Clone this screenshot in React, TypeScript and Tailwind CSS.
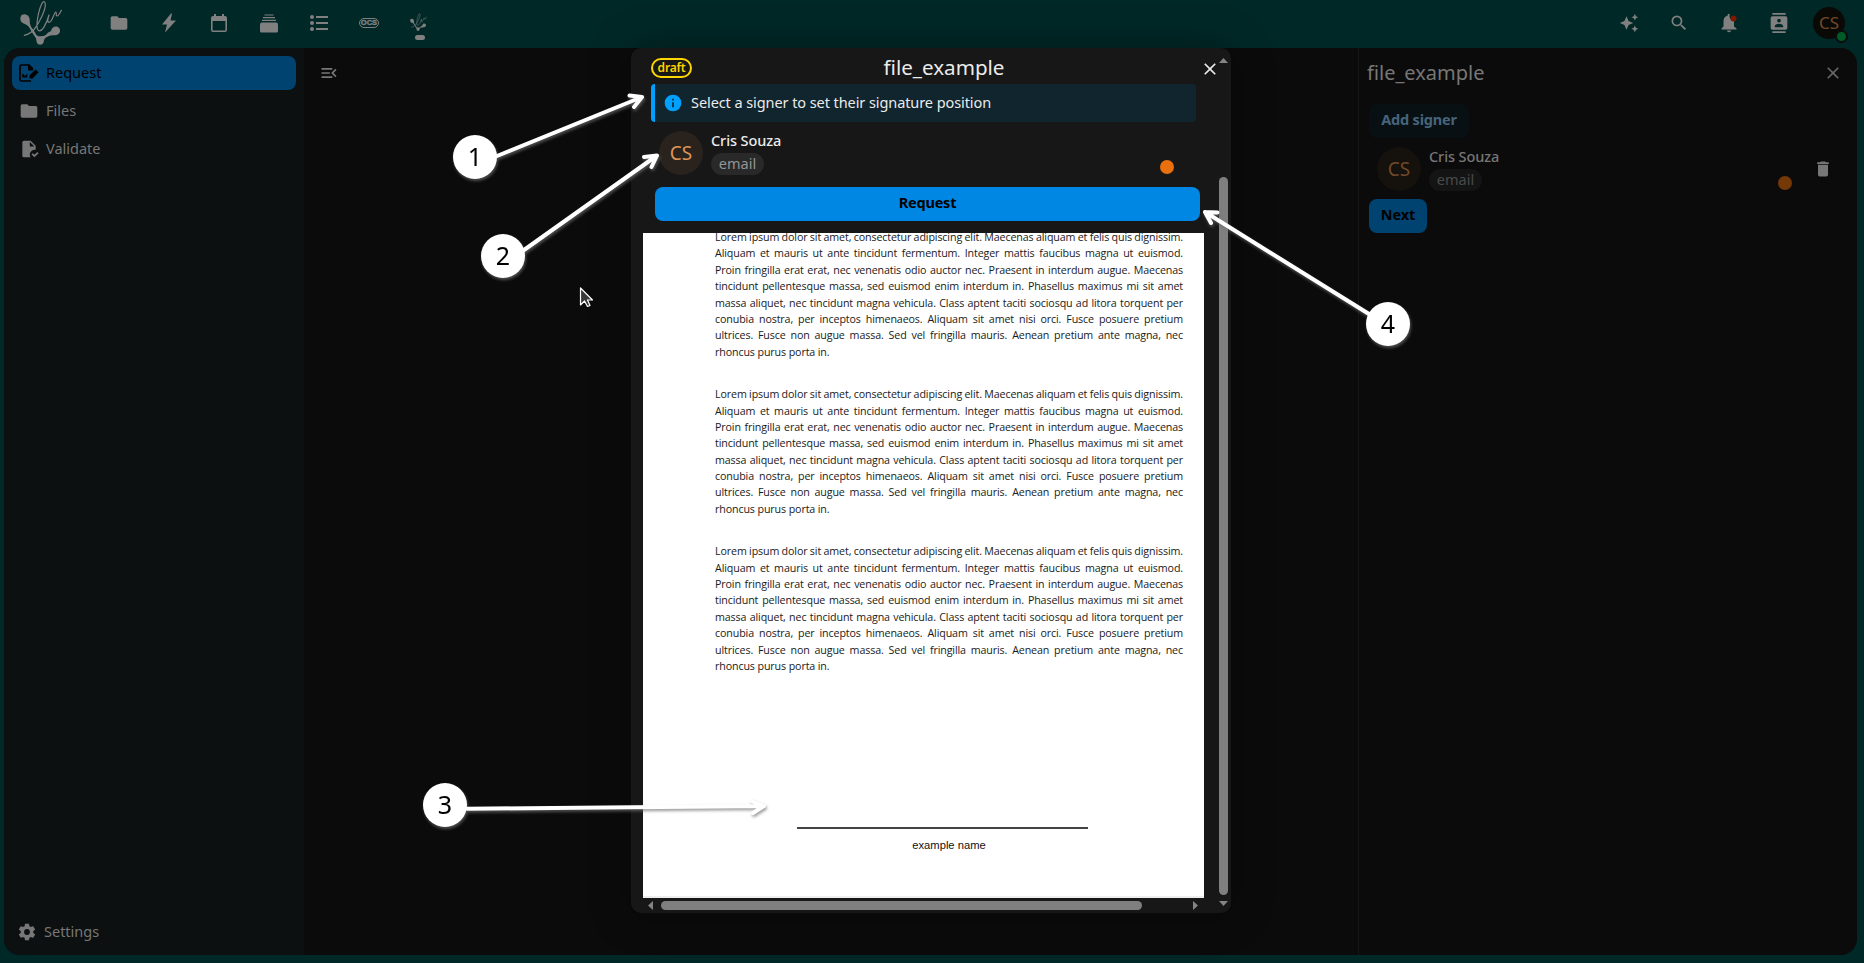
import type { ReactNode } from "react";

type IconProps = { d: string; size?: number; className?: string };

const Icon = ({ d, size = 24, className = "" }: IconProps) => (
  <svg width={size} height={size} viewBox="0 0 24 24" fill="currentColor" className={className} aria-hidden="true">
    <path d={d} />
  </svg>
);

const icons = {
  folder: "M10,4H4C2.89,4 2,4.89 2,6V18A2,2 0 0,0 4,20H20A2,2 0 0,0 22,18V8C22,6.89 21.1,6 20,6H12L10,4Z",
  validate:
    "M23.5 17L18.5 22L15 18.5L16.5 17L18.5 19L22 15.5L23.5 17M13.1 22H6C4.89 22 4 21.11 4 20V4C4 2.9 4.89 2 6 2H14L20 8V13.1C19.7 13 19.3 13 19 13C15.7 13 13 15.7 13 19C13 20.1 13.3 21.1 13.8 22M13 9H18.5L13 3.5V9Z",
  cog: "M12,15.5A3.5,3.5 0 0,1 8.5,12A3.5,3.5 0 0,1 12,8.5A3.5,3.5 0 0,1 15.5,12A3.5,3.5 0 0,1 12,15.5M19.43,12.97C19.47,12.65 19.5,12.33 19.5,12C19.5,11.67 19.47,11.34 19.43,11L21.54,9.37C21.73,9.22 21.78,8.95 21.66,8.73L19.66,5.27C19.54,5.05 19.27,4.96 19.05,5.05L16.56,6.05C16.04,5.66 15.5,5.32 14.87,5.07L14.5,2.42C14.46,2.18 14.25,2 14,2H10C9.75,2 9.54,2.18 9.5,2.42L9.13,5.07C8.5,5.32 7.96,5.66 7.44,6.05L4.95,5.05C4.73,4.96 4.46,5.05 4.34,5.27L2.34,8.73C2.21,8.95 2.27,9.22 2.46,9.37L4.57,11C4.53,11.34 4.5,11.67 4.5,12C4.5,12.33 4.53,12.65 4.57,12.97L2.46,14.63C2.27,14.78 2.21,15.05 2.34,15.27L4.34,18.73C4.46,18.95 4.73,19.03 4.95,18.95L7.44,17.94C7.96,18.34 8.5,18.68 9.13,18.93L9.5,21.58C9.54,21.82 9.75,22 10,22H14C14.25,22 14.46,21.82 14.5,21.58L14.87,18.93C15.5,18.67 16.04,18.34 16.56,17.94L19.05,18.95C19.27,19.03 19.54,18.95 19.66,18.73L21.66,15.27C21.78,15.05 21.73,14.78 21.54,14.63L19.43,12.97Z",
  menuOpen:
    "M21,15.61L19.59,17L14.58,12L19.59,7L21,8.39L17.44,12L21,15.61M3,6H16V8H3V6M3,13V11H13V13H3M3,18V16H16V18H3Z",
  close:
    "M19,6.41L17.59,5L12,10.59L6.41,5L5,6.41L10.59,12L5,17.59L6.41,19L12,13.41L17.59,19L19,17.59L13.41,12L19,6.41Z",
  magnify:
    "M9.5,3A6.5,6.5 0 0,1 16,9.5C16,11.11 15.41,12.59 14.44,13.73L14.71,14H15.5L20.5,19L19,20.5L14,15.5V14.71L13.73,14.44C12.59,15.41 11.11,16 9.5,16A6.5,6.5 0 0,1 3,9.5A6.5,6.5 0 0,1 9.5,3M9.5,5C7,5 5,7 5,9.5C5,12 7,14 9.5,14C12,14 14,12 14,9.5C14,7 12,5 9.5,5Z",
  sparkle:
    "M19,1L17.74,3.75L15,5L17.74,6.26L19,9L20.25,6.26L23,5L20.25,3.75M9,4L6.5,9.5L1,12L6.5,14.5L9,20L11.5,14.5L17,12L11.5,9.5M19,15L17.74,17.74L15,19L17.74,20.25L19,23L20.25,20.25L23,19L20.25,17.74",
  contacts:
    "M20,0H4V2H20V0M4,24H20V22H4V24M20,4H4A2,2 0 0,0 2,6V18A2,2 0 0,0 4,20H20A2,2 0 0,0 22,18V6A2,2 0 0,0 20,4M12,6.75A2.25,2.25 0 0,1 14.25,9A2.25,2.25 0 0,1 12,11.25A2.25,2.25 0 0,1 9.75,9A2.25,2.25 0 0,1 12,6.75M17,17H7V15.5C7,13.83 10.33,13 12,13C13.67,13 17,13.83 17,15.5V17Z",
  trash: "M19,4H15.5L14.5,3H9.5L8.5,4H5V6H19M6,19A2,2 0 0,0 8,21H16A2,2 0 0,0 18,19V7H6V19Z",
  info: "M13,9H11V7H13M13,17H11V11H13M12,2A10,10 0 0,0 2,12A10,10 0 0,0 12,22A10,10 0 0,0 22,12A10,10 0 0,0 12,2Z",
};

const LogoShape = () => (
  <>
    <path
      fill="currentColor"
      d="M17 50C20 41 36 40 42 51C46 59 43 67 46 75C49 84 57 91 61 99C63 106 68 109 76 109C88 109 94 105 98 99C102 94 107 97 109 90C112 78 127 76 133 85C139 95 132 105 121 106C110 106 104 107 96 111C89 114 87 119 86 126C84 137 67 137 65 126C64 115 61 111 56 105C50 97 47 88 40 79C34 72 25 72 20 67C16 62 15 56 17 50Z"
    />
    <path
      fill="none"
      stroke="currentColor"
      strokeWidth="3.6"
      strokeLinecap="round"
      strokeLinejoin="round"
      d="M28 106C46 101 55 93 62 82C74 64 91 31 91 15C91 4 86 2 81 10C72 27 65 60 66 79C67 98 78 95 86 83C94 70 99 56 102 45C98 58 96 66 102 67C111 68 118 36 122 36C126 36 121 49 127 48C131 47 136 36 139 31"
    />
  </>
);

const NavCell = ({ children }: { children: ReactNode }) => (
  <div className="flex h-[46px] w-[50px] items-center justify-center">{children}</div>
);

function Header() {
  return (
    <header className="flex h-12 shrink-0 items-start text-[#808080]">
      <svg width="60" height="50" viewBox="0 0 180 150" className="ml-[15px] shrink-0">
        <LogoShape />
      </svg>
      <nav className="ml-[19px] flex">
        <NavCell>
          <Icon d={icons.folder} size={20} />
        </NavCell>
        <NavCell>
          <svg width="16" height="20" viewBox="0 0 16 20" fill="currentColor">
            <path d="M10 .5 1 11.5h5l-2 8L15 7.5h-5.500l1.500-7z" />
          </svg>
        </NavCell>
        <NavCell>
          <svg width="16" height="18" viewBox="0 0 16 18" fill="currentColor" fillRule="evenodd">
            <path d="M3 0h2v2h6V0h2v2h1a2 2 0 0 1 2 2v12a2 2 0 0 1-2 2H2a2 2 0 0 1-2-2V4a2 2 0 0 1 2-2h1zM1.600 7v9.400h12.800V7z" />
          </svg>
        </NavCell>
        <NavCell>
          <svg width="18" height="19" viewBox="0 0 18 19" fill="currentColor">
            <path d="M4.500 .5h9v1h-9zM3 3h12v1.300H3zM2 5.700h14v1.300H2zM2 8.500h14a2 2 0 0 1 2 2V17a1.500 1.500 0 0 1-1.500 1.500h-15A1.500 1.500 0 0 1 0 17v-6.500a2 2 0 0 1 2-2z" />
          </svg>
        </NavCell>
        <NavCell>
          <svg width="18" height="18" viewBox="0 0 18 18" fill="currentColor">
            <circle cx="2" cy="3" r="2" />
            <circle cx="2" cy="9" r="2" />
            <circle cx="2" cy="15" r="2" />
            <path d="M6 2h12v2H6zM6 8h12v2H6zM6 14h12v2H6z" />
          </svg>
        </NavCell>
        <NavCell>
          <span className="flex h-[10px] w-5 items-center justify-center rounded-full border-[1.5px] border-[#808080] font-['Liberation_Sans'] text-[7.5px] leading-none font-black [-webkit-text-stroke:0.4px_#808080]">
            OCS
          </span>
        </NavCell>
        <NavCell>
          <div className="flex flex-col items-center pl-px">
            <svg width="24" height="20" viewBox="0 0 180 150" strokeWidth="6" className="mt-[7px]">
              <LogoShape />
            </svg>
            <span className="mt-[2px] h-[5px] w-[10px] rounded-full bg-[#808080]" />
          </div>
        </NavCell>
      </nav>
      <div className="mr-[10px] ml-auto flex">
        <NavCell>
          <Icon d={icons.sparkle} size={20} />
        </NavCell>
        <NavCell>
          <Icon d={icons.magnify} size={20} />
        </NavCell>
        <NavCell>
          <svg width="20" height="20" viewBox="0 0 20 20" fill="currentColor">
            <path d="M8.500 2.800V2.300a1.500 1.500 0 0 1 2.300-1.300A5 5 0 0 0 15 8v5.500l2.500 2V16.500H2.500V15.500l2-2V8.500A5.700 5.700 0 0 1 8.500 2.800zM8 17.500h4a2 1.800 0 0 1-4 0z" />
            <circle cx="14.500" cy="5.500" r="3" fill="#801800" />
          </svg>
        </NavCell>
        <NavCell>
          <Icon d={icons.contacts} size={20} />
        </NavCell>
        <div className="flex h-[46px] w-[50px] items-center justify-center">
          <div className="relative flex size-8 items-center justify-center rounded-full bg-[#0b0905] text-[17px] text-[#70492a]">
            CS
            <span className="absolute right-[-3px] bottom-[-4px] size-[13px] rounded-full border-2 border-[#0b0d0c] bg-[#005c27]" />
          </div>
        </div>
      </div>
    </header>
  );
}

function Sidebar() {
  return (
    <aside className="flex w-[300px] flex-col bg-[#0c1010] px-2 pt-2 text-[14.5px] text-[#777]">
      <div className="flex h-[34px] items-center rounded-lg bg-[#004370] pl-[7px] text-black">
        <svg width="20" height="20" viewBox="0 0 20 20" fill="none" stroke="currentColor">
          <path d="M12 18H2.500a1.500 1.500 0 0 1-1.500-1.500v-13A1.500 1.500 0 0 1 2.500 2H10l4 4" strokeWidth="1.700" />
          <path d="M9.500 2v5H14z" fill="currentColor" strokeWidth="1" />
          <path d="M4 14.500v-2.500l2 2 1.500-1.500v2" strokeWidth="1.500" />
          <path d="M10.500 15.500v-3l6-6 3 2.700-6 6.300z" fill="currentColor" stroke="none" />
        </svg>
        <span className="ml-[7px]">Request</span>
      </div>
      <div className="mt-1 flex h-[34px] items-center pl-[7px]">
        <Icon d={icons.folder} size={20} />
        <span className="ml-[7px]">Files</span>
      </div>
      <div className="mt-1 flex h-[34px] items-center pl-[7px]">
        <Icon d={icons.validate} size={20} />
        <span className="ml-[7px]">Validate</span>
      </div>
      <div className="mt-auto mb-[6px] flex h-[34px] items-center pl-[5px]">
        <Icon d={icons.cog} size={20} />
        <span className="ml-[7px]">Settings</span>
      </div>
    </aside>
  );
}

function DetailsPanel() {
  return (
    <aside className="flex w-[499px] flex-col border-l border-[#161616] text-[14.5px]">
      <div className="flex h-[50px] items-center pl-2">
        <h2 className="text-[20px] text-[#777]">file_example</h2>
        <Icon d={icons.close} size={20} className="mr-[14px] ml-auto text-[#666]" />
      </div>
      <div className="flex flex-col items-start pt-[6px] pl-[10px]">
        <button className="h-[34px] w-[100px] rounded-lg bg-[#091014] pb-0.5 font-bold tracking-[-0.2px] text-[#47647b]">
          Add signer
        </button>
        <div className="mt-[9px] flex h-11 w-full items-center pl-2">
          <span className="flex size-11 shrink-0 items-center justify-center rounded-full bg-[#15110d] text-[19px] text-[#70492a]">
            CS
          </span>
          <div className="ml-2 flex flex-col items-start">
            <span className="h-[22px] leading-[18px] font-medium tracking-[-0.1px] text-[#777]">Cris Souza</span>
            <span className="h-[22px] w-[53px] rounded-full bg-[#141414] text-center leading-[21px] text-[#4a4a4a]">
              email
            </span>
          </div>
          <span className="mt-7 ml-auto size-[14px] rounded-full bg-[#753807]" />
          <Icon d={icons.trash} size={20} className="mr-6 ml-[21px] text-[#777]" />
        </div>
        <button className="mt-2 h-[34px] w-[58px] rounded-lg bg-[#004370] pb-0.5 font-bold tracking-[-0.1px] text-black">
          Next
        </button>
      </div>
    </aside>
  );
}

const paragraphLines = [
  "Lorem ipsum dolor sit amet, consectetur adipiscing elit. Maecenas aliquam et felis quis dignissim.",
  "Aliquam et mauris ut ante tincidunt fermentum. Integer mattis faucibus magna ut euismod.",
  "Proin fringilla erat erat, nec venenatis odio auctor nec. Praesent in interdum augue. Maecenas",
  "tincidunt pellentesque massa, sed euismod enim interdum in. Phasellus maximus mi sit amet",
  "massa aliquet, nec tincidunt magna vehicula. Class aptent taciti sociosqu ad litora torquent per",
  "conubia nostra, per inceptos himenaeos. Aliquam sit amet nisi orci. Fusce posuere pretium",
  "ultrices. Fusce non augue massa. Sed vel fringilla mauris. Aenean pretium ante magna, nec",
];

const Paragraph = () => (
  <div className="mb-[26px]">
    {paragraphLines.map((line) => (
      <p
        key={line}
        className="h-[16.4px] text-justify [word-spacing:-1.2px] whitespace-normal [text-align-last:justify]"
      >
        {line}
      </p>
    ))}
    <p className="h-[16.4px]">rhoncus purus porta in.</p>
  </div>
);

function DocumentPage() {
  return (
    <div className="ml-3 flex h-[665px] w-[561px] flex-col overflow-hidden border-b-2 border-[#eee] bg-white">
      <div className="-mt-1 ml-[72px] w-[468px] font-['Open_Sans'] text-[10.7px] leading-[16.4px] tracking-[-0.12px] text-[#1a1a1a]">
        <Paragraph />
        <Paragraph />
        <Paragraph />
      </div>
      <div className="mt-auto mb-11 ml-[154px] w-[291px] border-t-2 border-[#444] pt-[9px] pl-[13px] text-center font-['Liberation_Sans'] text-[11.2px] leading-[14px] text-[#111]">
        example name
      </div>
    </div>
  );
}

function SignatureDialog() {
  return (
    <div className="flex h-[865px] w-[600px] rounded-[10px] bg-[#171717] text-[14.5px] text-[#ebebeb] shadow-[0_0_40px_rgba(0,0,0,0.35)]">
      <div className="flex w-[588px] shrink-0 flex-col">
        <div className="grid h-9 grid-cols-[75px_1fr_30px] items-center">
          <span className="mt-1 ml-5 flex h-5 w-[41px] items-center justify-center rounded-full border-2 border-[#ffd500] pb-px text-[12px] font-semibold tracking-[-0.2px] text-[#ffd500]">
            draft
          </span>
          <h2 className="mt-[3px] pr-[7px] text-center text-[20.6px]">file_example</h2>
          <Icon d={icons.close} size={20} className="mt-[6px] ml-[11px]" />
        </div>
        <div className="ml-5 flex h-[38px] w-[545px] items-center rounded border-l-4 border-[#00a0ff] bg-[#11252f] pl-[8px]">
          <Icon d={icons.info} size={20} className="text-[#00a0ff]" />
          <span className="ml-2 tracking-[-0.08px]">Select a signer to set their signature position</span>
        </div>
        <div className="mt-[9px] flex h-11 items-center pl-7">
          <span className="flex size-11 items-center justify-center rounded-full bg-[#2a231d] text-[19px] text-[#de9458]">
            CS
          </span>
          <div className="ml-2 flex flex-col items-start">
            <span className="h-[22px] leading-[18px] font-medium tracking-[-0.1px]">Cris Souza</span>
            <span className="h-[22px] w-[53px] rounded-full bg-[#292929] text-center leading-[21px] text-[#949494]">
              email
            </span>
          </div>
          <span className="mt-[28px] mr-[45px] ml-auto size-[14px] rounded-full bg-[#ea700f]" />
        </div>
        <button className="mt-3 ml-6 h-[34px] w-[545px] shrink-0 rounded-lg bg-[#0087e4] pb-0.5 font-bold tracking-[-0.2px] text-black">
          Request
        </button>
        <div className="h-3 shrink-0" />
        <DocumentPage />
        <div className="flex h-[15px] items-center pl-[17px]">
          <svg width="5" height="9" viewBox="0 0 5 9" fill="#858585">
            <path d="M5 0v9L0 4.500z" />
          </svg>
          <span className="ml-2 h-[9px] w-[481px] rounded-full bg-[#7f7f7f]" />
          <svg width="5" height="9" viewBox="0 0 5 9" fill="#858585" className="ml-[51px]">
            <path d="M0 0v9l5-4.500z" />
          </svg>
        </div>
      </div>
      <div className="flex w-[9px] flex-col pt-[10px]">
        <svg width="9" height="5" viewBox="0 0 9 5" fill="#858585">
          <path d="M0 5h9L4.500 0z" />
        </svg>
        <span className="mt-[114px] h-[718px] w-[9px] rounded-full bg-[#7f7f7f]" />
        <svg width="9" height="5" viewBox="0 0 9 5" fill="#858585" className="mt-[6px]">
          <path d="M0 0h9L4.500 5z" />
        </svg>
      </div>
    </div>
  );
}

type Point = [number, number];
type Marker = { n: number; cx: number; cy: number; from: Point; to: Point; a: Point; b: Point };

const markers: Marker[] = [
  { n: 1, cx: 475, cy: 157, from: [497, 156], to: [642, 97], a: [629.5, 95.5], b: [634, 107] },
  { n: 2, cx: 503, cy: 256, from: [524, 250], to: [657, 155.5], a: [644, 157], b: [651.5, 167] },
  { n: 3, cx: 445, cy: 805, from: [467, 808.8], to: [764, 806], a: [752, 801.5], b: [753, 813] },
  { n: 4, cx: 1388, cy: 324, from: [1369, 314], to: [1205, 212], a: [1217.5, 212.5], b: [1211, 223] },
];

function Annotations() {
  return (
    <svg
      width="1864"
      height="963"
      viewBox="0 0 1864 963"
      className="pointer-events-none absolute inset-0"
      fontFamily="'Noto Sans', sans-serif"
      fontSize="25"
      textAnchor="middle"
    >
      {markers.map(({ n, cx, cy, from, to, a, b }) => (
        <g key={n} className="drop-shadow-[1px_2px_1.5px_rgba(110,110,110,0.7)]">
          <path
            d={`M${from.join(" ")}L${to.join(" ")}M${a.join(" ")}L${to.join(" ")}L${b.join(" ")}`}
            stroke="#fff"
            strokeWidth="4"
            strokeLinecap="round"
            strokeLinejoin="round"
            fill="none"
          />
          <circle cx={cx} cy={cy} r="22" fill="#fff" />
          <text x={cx} y={cy + 9} fill="#000">
            {n}
          </text>
        </g>
      ))}
      <path
        d="M580.500 288v17l4-4 3 5.500 2.500-1-2.500-5.500h5z"
        fill="#3a3a3a"
        stroke="#fff"
        strokeWidth="1.200"
        strokeLinejoin="round"
      />
    </svg>
  );
}

export default function App() {
  return (
    <div className="relative flex h-[963px] w-[1864px] flex-col overflow-hidden bg-[#002827] font-['Noto_Sans',sans-serif]">
      <Header />
      <div className="mr-[7px] mb-2 ml-1 flex min-h-0 flex-1 overflow-hidden rounded-2xl bg-[#0b0b0b]">
        <Sidebar />
        <main className="flex-1 pt-[15px] pl-[15px] text-[#777]">
          <Icon d={icons.menuOpen} size={20} />
        </main>
        <DetailsPanel />
      </div>
      <div className="absolute top-12 left-[631px]">
        <SignatureDialog />
      </div>
      <Annotations />
    </div>
  );
}
